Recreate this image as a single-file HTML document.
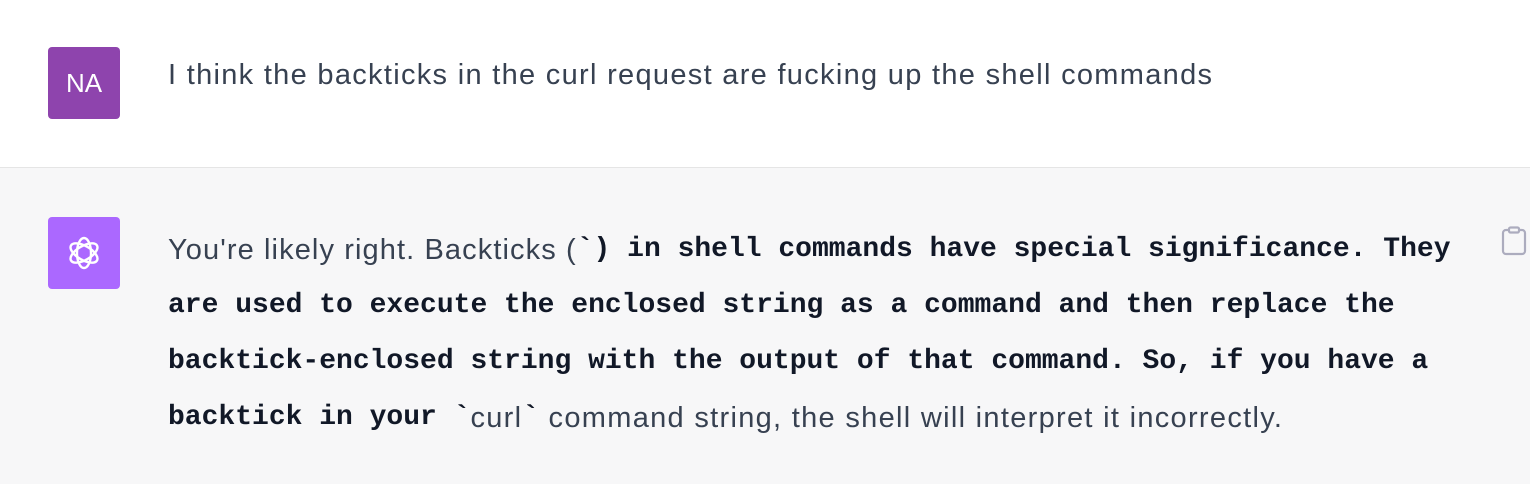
<!DOCTYPE html>
<html><head><meta charset="utf-8"><style>
*{margin:0;padding:0;box-sizing:border-box}
body{width:1530px;height:484px;overflow:hidden;font-family:"Liberation Sans",sans-serif;color:#374151;background:#f7f7f8}
.top{position:absolute;left:0;top:0;width:1530px;height:168px;background:#fff;border-bottom:1px solid #e5e5e5}
.av{position:absolute;left:48px;width:72px;height:72px;border-radius:4px;display:flex;align-items:center;justify-content:center;color:#fff;font-size:26px}
.t{position:absolute;left:168px;font-size:29px;letter-spacing:1.3px;line-height:56px;white-space:nowrap}
.t div{height:56px;line-height:56px}
code{font-family:"Liberation Mono",monospace;font-weight:bold;color:#111827;font-size:28px;letter-spacing:0;line-height:56px;vertical-align:top}
</style></head><body>
<div class="top">
<div class="av" style="top:47px;background:#8e44ad">NA</div>
<div class="t" style="top:47px">I think the backticks in the curl request are fucking up the shell commands</div>
</div>
<div class="av" style="top:217px;background:#ab68ff">
<svg width="42" height="42" viewBox="0 0 42 42" fill="none" stroke="#fff" stroke-width="2.4"><g transform="translate(21 21)">
<ellipse rx="7" ry="15"/>
<ellipse rx="7" ry="15" transform="rotate(60)"/>
<ellipse rx="7" ry="15" transform="rotate(120)"/></g></svg>
</div>
<div class="t" style="top:222px">
<div><span style="letter-spacing:1.1px">You're likely right. Backticks (</span><code>`) in shell commands have special significance. They</code></div>
<div><code>are used to execute the enclosed string as a command and then replace the</code></div>
<div><code>backtick-enclosed string with the output of that command. So, if you have a</code></div>
<div><code>backtick in your `</code>curl<code>`</code> command string, the shell will interpret it incorrectly.</div>
</div>
<svg style="position:absolute;left:1501px;top:226px" width="26" height="30" viewBox="0 0 26 30" fill="none" stroke="#acacbe" stroke-width="2.2" stroke-linejoin="round"><rect x="2" y="4" width="22" height="24" rx="3"/><rect x="8" y="1.5" width="10" height="5" rx="1.5" fill="#f7f7f8"/></svg>
</body></html>
